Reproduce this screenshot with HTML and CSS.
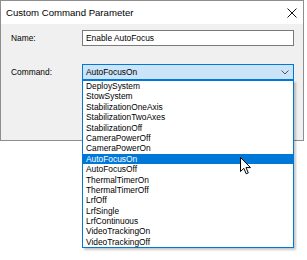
FILE: index.html
```html
<!doctype html>
<html lang="en">
<head>
  <meta charset="UTF-8" />
  <title>Custom Command Parameter</title>
  <link rel="stylesheet" href="styles.css">
</head>
<body>
  <div class="dialog">
    <div class="titlebar">
      <span class="title">Custom Command Parameter</span>
      <svg class="close" width="10" height="10" viewBox="0 0 10 10">
        <path d="M0.5 0.5 L9.5 9.5 M9.5 0.5 L0.5 9.5" stroke="#111" stroke-width="1" fill="none" />
      </svg>
    </div>

    <div class="content">
      <div class="row row-name">
        <label class="label">Name:</label>
        <div class="textbox">Enable AutoFocus</div>
      </div>

      <div class="row row-command">
        <label class="label">Command:</label>
        <div class="combo">
          <div class="combo-value">
            <span>AutoFocusOn</span>
            <svg class="chevron" width="8" height="5" viewBox="0 0 8 5">
              <path d="M0.5 0.5 L4 4 L7.5 0.5" stroke="#555" stroke-width="1" fill="none" />
            </svg>
          </div>
          <ul class="dropdown" id="list"></ul>
        </div>
      </div>
    </div>
  </div>

  <svg class="cursor" width="12" height="18" viewBox="0 0 12 18">
    <path d="M0.5 0.5 L0.5 14.5 L3.8 11.3 L6.2 16.8 L8.3 15.9 L6 10.6 L10.5 10.6 Z" fill="#fff" stroke="#000" stroke-width="1" stroke-linejoin="round" />
  </svg>

  <script>
    const commands = [
      "DeploySystem", "StowSystem", "StabilizationOneAxis", "StabilizationTwoAxes",
      "StabilizationOff", "CameraPowerOff", "CameraPowerOn", "AutoFocusOn",
      "AutoFocusOff", "ThermalTimerOn", "ThermalTimerOff", "LrfOff",
      "LrfSingle", "LrfContinuous", "VideoTrackingOn", "VideoTrackingOff"
    ];
    const selected = "AutoFocusOn";

    document.getElementById("list").innerHTML = commands.map(c => `
      <li class="item${c === selected ? " selected" : ""}">${c}</li>
    `).join("");
  </script>
</body>
</html>
```

FILE: styles.css
```css
* { box-sizing: border-box; }
body {
  margin: 0;
  background: #fff;
  font-family: "Liberation Sans", Arial, sans-serif;
  color: #000;
  position: relative;
  width: 307px;
  height: 260px;
  overflow: hidden;
}
.dialog {
  width: 304px;
  height: 141px;
  border: 1px solid #8e8e8e;
  background: #f0f0f0;
  display: flex;
  flex-direction: column;
}
.titlebar {
  height: 23px;
  background: #fff;
  display: flex;
  align-items: center;
  justify-content: space-between;
  padding: 0 6px 0 5px;
}
.title { font-size: 9.6px; line-height: 1; margin-top: 1px; }
.close { display: block; }

.content { padding: 6px 0 0 10px; }
.row { display: flex; align-items: flex-start; }
.label {
  width: 71px;
  font-size: 8.4px;
  line-height: 16px;
}
.row-command { margin-top: 18px; }

.textbox {
  width: 212px;
  height: 16px;
  border: 1px solid #7a7a7a;
  background: #fff;
  font-size: 8.4px;
  line-height: 14px;
  padding-left: 3px;
}

.combo { position: relative; width: 212px; }
.combo-value {
  height: 16px;
  border: 1px solid #0078d7;
  background: #cce4f7;
  font-size: 8.4px;
  line-height: 14px;
  padding: 0 4px 0 3px;
  display: flex;
  align-items: center;
  justify-content: space-between;
}
.chevron { display: block; }

.dropdown {
  position: absolute;
  top: 16px;
  left: 0;
  width: 212px;
  margin: 0;
  padding: 0;
  list-style: none;
  background: #fff;
  border: 1px solid #0078d7;
  box-shadow: 2px 2px 2px rgba(0,0,0,.22);
  z-index: 5;
}
.item {
  height: 10.4px;
  line-height: 10.4px;
  font-size: 8.4px;
  padding-left: 3px;
  white-space: nowrap;
}
.item.selected { background: #0078d7; color: #fff; }

.cursor {
  position: absolute;
  left: 240px;
  top: 157px;
  z-index: 10;
}
```
